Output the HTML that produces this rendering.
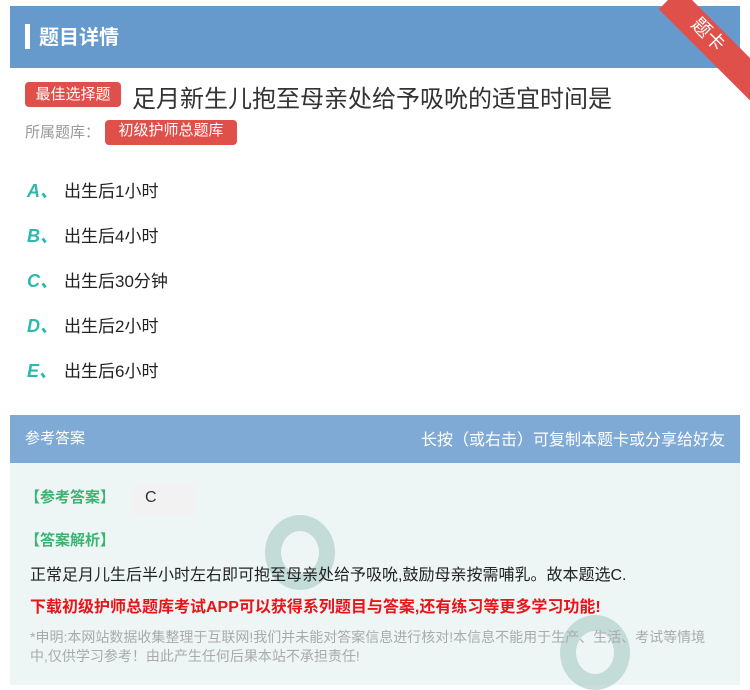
<!DOCTYPE html>
<html><head><meta charset="utf-8"><style>
*{margin:0;padding:0;box-sizing:border-box}
body{width:750px;height:685px;background:#fff;position:relative;overflow:hidden;font-family:"Liberation Sans","Noto Sans CJK SC",sans-serif;color:#333}
.abs{position:absolute;white-space:nowrap}
.hdr{position:absolute;left:10px;top:6px;width:730px;height:62px;background:#6699cc}
.tag{position:absolute;background:#e0504a;color:#fff;border-radius:4px;text-align:center}
.opt{position:absolute;left:27px;font-size:17px;color:#222}
.opt b{color:#2bb8ad;font-style:italic;font-weight:bold;display:inline-block;width:37px;font-size:18px}
</style></head><body>
<div class="hdr"></div>
<div class="abs" style="left:25px;top:24px;width:5px;height:25px;background:#fff"></div>
<div class="abs" style="left:39px;top:21px;font-size:20px;font-weight:bold;color:#fff">题目详情</div>
<div class="abs" style="width:150px;height:30px;background:#e0504a;transform:rotate(45deg);transform-origin:0 0;left:680px;top:-12px"></div>
<div class="abs" style="left:690px;top:20px;font-size:19px;color:#fff;transform:rotate(45deg)">题卡</div>
<div class="tag" style="left:25px;top:82px;width:96px;height:25px;font-size:15px;line-height:25px">最佳选择题</div>
<div class="abs" style="left:132px;top:79px;font-size:24px;color:#333">足月新生儿抱至母亲处给予吸吮的适宜时间是</div>
<div class="abs" style="left:25px;top:121px;font-size:15px;color:#999">所属题库：</div>
<div class="tag" style="left:105px;top:120px;width:132px;height:25px;font-size:15px;line-height:22px">初级护师总题库</div>
<div class="opt" style="top:177px"><b>A、</b>出生后1小时</div>
<div class="opt" style="top:222px"><b>B、</b>出生后4小时</div>
<div class="opt" style="top:267px"><b>C、</b>出生后30分钟</div>
<div class="opt" style="top:312px"><b>D、</b>出生后2小时</div>
<div class="opt" style="top:357px"><b>E、</b>出生后6小时</div>
<div class="abs" style="left:10px;top:415px;width:730px;height:48px;background:#80aad6"></div>
<div class="abs" style="left:25px;top:427px;font-size:15px;color:#fff">参考答案</div>
<div class="abs" style="right:25px;top:426px;font-size:16px;color:#fff">长按（或右击）可复制本题卡或分享给好友</div>
<div class="abs" style="left:10px;top:463px;width:730px;height:222px;background:#eef6f5"></div>
<div class="abs" style="left:265px;top:515px;width:70px;height:75px;border-radius:50%;border:16px solid #b9d6cf;opacity:.8"></div>
<div class="abs" style="left:560px;top:615px;width:70px;height:75px;border-radius:50%;border:16px solid #b9d6cf;opacity:.8"></div>
<div class="abs" style="left:25px;top:486px;font-size:15px;font-weight:bold;color:#3cb371">【参考答案】</div>
<div class="abs" style="left:131px;top:484px;width:64px;height:32px;background:#f2f2f2;font-size:16px;padding-left:14px;line-height:28px">C</div>
<div class="abs" style="left:25px;top:529px;font-size:15px;font-weight:bold;color:#3cb371">【答案解析】</div>
<div class="abs" style="left:30px;top:561px;font-size:16px;color:#222">正常足月儿生后半小时左右即可抱至母亲处给予吸吮,鼓励母亲按需哺乳。故本题选C.</div>
<div class="abs" style="left:30px;top:593px;font-size:16px;font-weight:bold;color:#e8141a">下载初级护师总题库考试APP可以获得系列题目与答案,还有练习等更多学习功能!</div>
<div class="abs" style="left:30px;top:628px;font-size:14px;color:#aaa;line-height:19px">*申明:本网站数据收集整理于互联网!我们并未能对答案信息进行核对!本信息不能用于生产、生活、考试等情境<br>中,仅供学习参考！由此产生任何后果本站不承担责任!</div>
</body></html>
